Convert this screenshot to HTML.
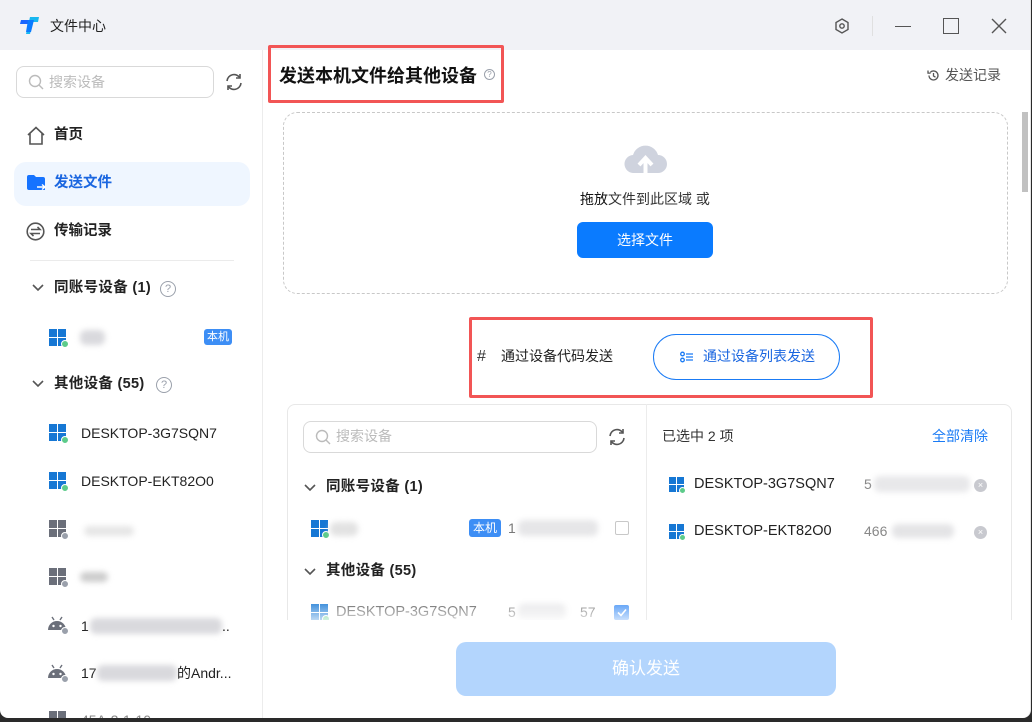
<!DOCTYPE html>
<html><head><meta charset="utf-8"><style>
*{margin:0;padding:0;box-sizing:border-box}
body{width:1032px;height:722px;overflow:hidden;background:#2a2a2a;font-family:"Liberation Sans","Noto Sans CJK SC",sans-serif;color:#222;position:relative}
.win{position:absolute;left:0;top:0;width:1031px;height:718px;background:#fff;border-radius:0 0 8px 8px;overflow:hidden;border-right:1px solid #e4e4e4}
.a{position:absolute}
.t{position:absolute;white-space:nowrap;line-height:1}
.blur{position:absolute;background:#d9d9dd;filter:blur(3px);border-radius:6px}
.win-ico{position:absolute;width:17px;height:17px}
.win-ico i{position:absolute;width:8px;height:8px}
.dot{position:absolute;width:8px;height:8px;border-radius:50%;border:1px solid #fff}
</style></head><body>
<div class="win">
<div class="a" style="left:0;top:0;width:1032px;height:50px;background:#f1f2f6"></div>
<svg class="a" style="left:20px;top:17px" width="20" height="18" viewBox="0 0 20 18"><path d="M1 3h8l-1 4H0z" fill="#1a66ff"/><path d="M10 0h9l-1 5h-5l-3 12H6z" fill="#18b7f0"/><path d="M8 3h6l-3 12H6z" fill="#0a7bff"/></svg>
<div class="t" style="left:50px;top:19px;font-size:14px;color:#222">文件中心</div>
<svg class="a" style="left:833px;top:17px" width="18" height="18" viewBox="0 0 18 18" fill="none" stroke="#555" stroke-width="1.4"><path d="M9 2l6 3.5v7L9 16l-6-3.5v-7z"/><circle cx="9" cy="9" r="2.2"/></svg>
<div class="a" style="left:872px;top:16px;width:1px;height:20px;background:#e0e0e0"></div>
<div class="a" style="left:895px;top:26px;width:16px;height:1.4px;background:#555"></div>
<div class="a" style="left:943px;top:18px;width:16px;height:16px;border:1.4px solid #555"></div>
<svg class="a" style="left:991px;top:18px" width="16" height="16" viewBox="0 0 16 16" stroke="#555" stroke-width="1.4"><path d="M1 1l14 14M15 1L1 15"/></svg>

<div class="a" style="left:262px;top:50px;width:1px;height:670px;background:#ececec"></div>
<div class="a" style="left:16px;top:66px;width:198px;height:32px;border:1px solid #d9d9d9;border-radius:8px"></div>
<svg class="a" style="left:28px;top:74px" width="16" height="16" viewBox="0 0 16 16" fill="none" stroke="#bbb" stroke-width="1.4"><circle cx="7" cy="7" r="5.5"/><path d="M11 11l4 4"/></svg>
<div class="t" style="left:49px;top:75px;font-size:14px;color:#bbb">搜索设备</div>
<svg class="a" style="left:224px;top:72px" width="20" height="20" viewBox="0 0 20 20" fill="none" stroke="#555" stroke-width="1.6"><path d="M3 9a7 7 0 0 1 13-3M17 11a7 7 0 0 1-13 3"/><path d="M16 2v4h-4M4 18v-4h4"/></svg>
<svg class="a" style="left:26px;top:126px" width="20" height="19" viewBox="0 0 20 19" fill="none" stroke="#555" stroke-width="1.6"><path d="M2 9L10 1.5 18 9M4 7.5V18h12V7.5"/></svg>
<div class="t" style="left:54px;top:128px;font-size:14.5px;font-weight:bold">首页</div>
<div class="a" style="left:14px;top:162px;width:236px;height:44px;background:#eff6ff;border-radius:12px"></div>
<svg class="a" style="left:27px;top:175px" width="19" height="17" viewBox="0 0 19 17"><path d="M0 2a2 2 0 0 1 2-2h5l2 2h7a2 2 0 0 1 2 2v11H2a2 2 0 0 1-2-2z" fill="#1673ff"/><path d="M10 12h8M15 9.5l3 2.5-3 2.5" stroke="#fff" stroke-width="1.4" fill="none"/></svg>
<div class="t" style="left:54px;top:176px;font-size:14.5px;font-weight:bold;color:#1a66e0">发送文件</div>
<svg class="a" style="left:26px;top:222px" width="19" height="19" viewBox="0 0 19 19" fill="none" stroke="#555" stroke-width="1.6"><circle cx="9.5" cy="9.5" r="8.3"/><path d="M5 7.5h9l-2.5-2.5M14 11.5H5l2.5 2.5"/></svg>
<div class="t" style="left:54px;top:224px;font-size:14.5px;font-weight:bold">传输记录</div>
<div class="a" style="left:30px;top:260px;width:204px;height:1px;background:#ebebeb"></div>
<svg class="a" style="left:32px;top:284px" width="12" height="8" viewBox="0 0 12 8" fill="none" stroke="#555" stroke-width="1.6"><path d="M1 1l5 5 5-5"/></svg>
<div class="t" style="left:54px;top:281px;font-size:14.5px;font-weight:bold;letter-spacing:.3px">同账号设备 (1)</div>
<div class="a" style="left:160px;top:281px;width:16px;height:16px;border:1.3px solid #9aa0ab;border-radius:50%;font-size:11px;color:#9aa0ab;text-align:center;line-height:14px">?</div>
<div class="win-ico" style="left:49px;top:329px"><i style="left:0;top:0;background:#1677d4"></i><i style="left:9px;top:0;background:#1677d4"></i><i style="left:0;top:9px;background:#1677d4"></i><i style="left:9px;top:9px;background:#1677d4"></i></div><div class="dot" style="left:61px;top:340px;background:#5ccb8a"></div>
<div class="blur" style="left:80px;top:330px;width:25px;height:15px"></div>
<div class="a" style="left:204px;top:329px;width:28px;height:16px;background:#3d8ef5;border-radius:3px;color:#fff;font-size:11px;text-align:center;line-height:16px">本机</div>
<svg class="a" style="left:32px;top:380px" width="12" height="8" viewBox="0 0 12 8" fill="none" stroke="#555" stroke-width="1.6"><path d="M1 1l5 5 5-5"/></svg>
<div class="t" style="left:54px;top:377px;font-size:14.5px;font-weight:bold;letter-spacing:.3px">其他设备 (55)</div>
<div class="a" style="left:156px;top:377px;width:16px;height:16px;border:1.3px solid #9aa0ab;border-radius:50%;font-size:11px;color:#9aa0ab;text-align:center;line-height:14px">?</div>

<div class="win-ico" style="left:49px;top:424px"><i style="left:0;top:0;background:#1677d4"></i><i style="left:9px;top:0;background:#1677d4"></i><i style="left:0;top:9px;background:#1677d4"></i><i style="left:9px;top:9px;background:#1677d4"></i></div><div class="dot" style="left:61px;top:436px;background:#5ccb8a"></div>
<div class="t" style="left:81px;top:426px;font-size:14px;color:#222">DESKTOP-3G7SQN7</div>
<div class="win-ico" style="left:49px;top:472px"><i style="left:0;top:0;background:#1677d4"></i><i style="left:9px;top:0;background:#1677d4"></i><i style="left:0;top:9px;background:#1677d4"></i><i style="left:9px;top:9px;background:#1677d4"></i></div><div class="dot" style="left:61px;top:484px;background:#5ccb8a"></div>
<div class="t" style="left:81px;top:474px;font-size:14px;color:#222">DESKTOP-EKT82O0</div>
<div class="win-ico" style="left:49px;top:520px"><i style="left:0;top:0;background:#6b6f7a"></i><i style="left:9px;top:0;background:#6b6f7a"></i><i style="left:0;top:9px;background:#6b6f7a"></i><i style="left:9px;top:9px;background:#6b6f7a"></i></div><div class="dot" style="left:61px;top:532px;background:#9aa0ab"></div>
<div class="blur" style="left:84px;top:526px;width:50px;height:10px;background:#e6e6e6"></div>
<div class="win-ico" style="left:49px;top:568px"><i style="left:0;top:0;background:#6b6f7a"></i><i style="left:9px;top:0;background:#6b6f7a"></i><i style="left:0;top:9px;background:#6b6f7a"></i><i style="left:9px;top:9px;background:#6b6f7a"></i></div><div class="dot" style="left:61px;top:580px;background:#9aa0ab"></div>
<div class="blur" style="left:80px;top:572px;width:28px;height:10px;background:#ccc"></div>
<svg class="a" style="left:47px;top:616px" width="20" height="16" viewBox="0 0 20 16"><path d="M5 1l2 3M15 1l-2 3" stroke="#6b6f7a" stroke-width="1.4"/><path d="M1 14a9 9 0 0 1 18 0z" fill="#6b6f7a"/><circle cx="6.5" cy="10" r="1.2" fill="#fff"/><circle cx="13.5" cy="10" r="1.2" fill="#fff"/></svg><div class="dot" style="left:61px;top:627px;background:#9aa0ab"></div>
<div class="t" style="left:81px;top:619px;font-size:14px">1</div><div class="blur" style="left:90px;top:618px;width:132px;height:16px"></div><div class="t" style="left:222px;top:619px;font-size:14px">..</div>
<svg class="a" style="left:47px;top:664px" width="20" height="16" viewBox="0 0 20 16"><path d="M5 1l2 3M15 1l-2 3" stroke="#6b6f7a" stroke-width="1.4"/><path d="M1 14a9 9 0 0 1 18 0z" fill="#6b6f7a"/><circle cx="6.5" cy="10" r="1.2" fill="#fff"/><circle cx="13.5" cy="10" r="1.2" fill="#fff"/></svg><div class="dot" style="left:61px;top:675px;background:#9aa0ab"></div>
<div class="t" style="left:81px;top:666px;font-size:14px">17</div><div class="blur" style="left:97px;top:665px;width:80px;height:16px"></div><div class="t" style="left:177px;top:666px;font-size:14px">的Andr...</div>
<div class="win-ico" style="left:49px;top:711px"><i style="left:0;top:0;background:#6b6f7a"></i><i style="left:9px;top:0;background:#6b6f7a"></i></div>
<div class="t" style="left:81px;top:713px;font-size:14px;color:#888">45A-2-1-10</div>

<div class="a" style="left:1022px;top:112px;width:6px;height:80px;background:#c1c1c1"></div>
<div class="a" style="left:268px;top:45px;width:236px;height:58px;border:3px solid #f25555;border-radius:2px"></div>
<div class="t" style="left:279px;top:67px;font-size:18px;font-weight:bold;color:#111">发送本机文件给其他设备</div>
<div class="a" style="left:484px;top:69px;width:11px;height:11px;border:1px solid #9aa0ab;border-radius:50%;font-size:8px;color:#9aa0ab;text-align:center;line-height:10px">?</div>
<svg class="a" style="left:927px;top:69px" width="13" height="13" viewBox="0 0 13 13" fill="none" stroke="#555" stroke-width="1.3"><path d="M2 6.5a4.5 4.5 0 1 0 1.3-3.2M1 1.5v2.6h2.6"/><path d="M6.5 4v3l2 1.2"/></svg>
<div class="t" style="left:945px;top:68px;font-size:14px;color:#555">发送记录</div>

<div class="a" style="left:283px;top:112px;width:725px;height:182px;border:1.5px dashed #c8c8c8;border-radius:14px"></div>
<svg class="a" style="left:624px;top:143px" width="43" height="33" viewBox="0 0 43 33"><path d="M10 30a9 9 0 0 1-1-18 13 13 0 0 1 25 0 9 9 0 0 1 0 18z" fill="#cfd3de"/><path d="M21.5 33V17M15 22l6.5-7 6.5 7" stroke="#fff" stroke-width="4" fill="none"/></svg>
<div class="t" style="left:580px;top:192px;font-size:14px;color:#333"><b style="font-weight:normal;color:#111">拖放</b>文件到此区域 或</div>
<div class="a" style="left:577px;top:222px;width:136px;height:36px;background:#0a7bff;border-radius:6px;color:#fff;font-size:14px;text-align:center;line-height:36px">选择文件</div>

<div class="a" style="left:469px;top:317px;width:404px;height:81px;border:3px solid #f25555;border-radius:2px"></div>
<div class="t" style="left:477px;top:349px;font-size:16px;color:#333">#</div>
<div class="t" style="left:501px;top:349px;font-size:14px;color:#222">通过设备代码发送</div>
<div class="a" style="left:653px;top:334px;width:187px;height:46px;border:1px solid #1a7bf5;border-radius:23px"></div>
<svg class="a" style="left:680px;top:351px" width="13" height="12" viewBox="0 0 13 12" fill="none" stroke="#1a7bf5" stroke-width="1.3"><circle cx="2.5" cy="3" r="1.8"/><circle cx="2.5" cy="9" r="1.8"/><path d="M6 3h7M6 6h7M6 9h7"/></svg>
<div class="t" style="left:703px;top:349px;font-size:14px;color:#1a66e0">通过设备列表发送</div>

<div class="a" style="left:287px;top:404px;width:725px;height:240px;border:1px solid #e8e8e8;border-radius:8px"></div>
<div class="a" style="left:646px;top:404px;width:1px;height:220px;background:#ececec"></div>
<div class="a" style="left:303px;top:421px;width:294px;height:32px;border:1px solid #d9d9d9;border-radius:8px"></div>
<svg class="a" style="left:315px;top:429px" width="16" height="16" viewBox="0 0 16 16" fill="none" stroke="#bbb" stroke-width="1.4"><circle cx="7" cy="7" r="5.5"/><path d="M11 11l4 4"/></svg>
<div class="t" style="left:336px;top:429px;font-size:14px;color:#bbb">搜索设备</div>
<svg class="a" style="left:607px;top:427px" width="20" height="20" viewBox="0 0 20 20" fill="none" stroke="#555" stroke-width="1.6"><path d="M3 9a7 7 0 0 1 13-3M17 11a7 7 0 0 1-13 3"/><path d="M16 2v4h-4M4 18v-4h4"/></svg>
<svg class="a" style="left:304px;top:484px" width="12" height="8" viewBox="0 0 12 8" fill="none" stroke="#555" stroke-width="1.6"><path d="M1 1l5 5 5-5"/></svg>
<div class="t" style="left:326px;top:480px;font-size:14.5px;font-weight:bold;letter-spacing:.3px">同账号设备 (1)</div>
<div class="win-ico" style="left:311px;top:520px"><i style="left:0;top:0;background:#1677d4"></i><i style="left:9px;top:0;background:#1677d4"></i><i style="left:0;top:9px;background:#1677d4"></i><i style="left:9px;top:9px;background:#1677d4"></i></div><div class="dot" style="left:322px;top:531px;background:#5ccb8a"></div>
<div class="blur" style="left:330px;top:522px;width:28px;height:14px;background:#e2e2e2"></div>
<div class="a" style="left:469px;top:519px;width:32px;height:18px;background:#3d8ef5;border-radius:3px;color:#fff;font-size:12px;text-align:center;line-height:18px">本机</div>
<div class="t" style="left:508px;top:521px;font-size:14px;color:#777">1</div><div class="blur" style="left:518px;top:520px;width:80px;height:16px;background:#e6e6e8"></div>
<div class="a" style="left:615px;top:521px;width:14px;height:14px;border:1px solid #c8c8c8;border-radius:2px"></div>
<svg class="a" style="left:304px;top:568px" width="12" height="8" viewBox="0 0 12 8" fill="none" stroke="#555" stroke-width="1.6"><path d="M1 1l5 5 5-5"/></svg>
<div class="t" style="left:326px;top:564px;font-size:14.5px;font-weight:bold;letter-spacing:.3px">其他设备 (55)</div>
<div class="win-ico" style="left:311px;top:604px"><i style="left:0;top:0;background:#1677d4"></i><i style="left:9px;top:0;background:#1677d4"></i><i style="left:0;top:9px;background:#1677d4"></i><i style="left:9px;top:9px;background:#1677d4"></i></div><div class="dot" style="left:322px;top:615px;background:#5ccb8a"></div>
<div class="t" style="left:336px;top:605px;font-size:14.5px;color:#555">DESKTOP-3G7SQN7</div>
<div class="t" style="left:508px;top:605px;font-size:14px;color:#777">5</div><div class="blur" style="left:518px;top:604px;width:48px;height:16px;background:#e6e6e8"></div><div class="t" style="left:580px;top:605px;font-size:14px;color:#777">57</div>
<div class="a" style="left:614px;top:605px;width:15px;height:15px;background:#3d8ef5;border-radius:2px"></div>
<svg class="a" style="left:617px;top:608px" width="10" height="9" viewBox="0 0 10 9" fill="none" stroke="#fff" stroke-width="1.6"><path d="M1 4.5l3 3 5-6"/></svg>
<div class="a" style="left:288px;top:598px;width:358px;height:26px;background:linear-gradient(rgba(255,255,255,0),rgba(255,255,255,.85))"></div>
<div class="a" style="left:286px;top:620px;width:740px;height:30px;background:#fff"></div>

<div class="t" style="left:662px;top:429px;font-size:14px;color:#333">已选中 2 项</div>
<div class="t" style="left:932px;top:429px;font-size:14px;color:#1a7bf5">全部清除</div>
<div class="win-ico" style="left:669px;top:477px;width:15px;height:15px"><i style="left:0;top:0;width:7px;height:7px;background:#1677d4"></i><i style="left:8px;top:0;width:7px;height:7px;background:#1677d4"></i><i style="left:0;top:8px;width:7px;height:7px;background:#1677d4"></i><i style="left:8px;top:8px;width:7px;height:7px;background:#1677d4"></i></div><div class="dot" style="left:679px;top:487px;background:#5ccb8a;width:7px;height:7px"></div>
<div class="t" style="left:694px;top:477px;font-size:14.5px;color:#222">DESKTOP-3G7SQN7</div>
<div class="t" style="left:864px;top:477px;font-size:14px;color:#888">5</div><div class="blur" style="left:874px;top:476px;width:96px;height:16px;background:#e8e8ea"></div>
<div class="a" style="left:974px;top:479px;width:13px;height:13px;background:#c8c9cf;border-radius:50%;color:#fff;font-size:9px;text-align:center;line-height:13px">×</div>
<div class="win-ico" style="left:669px;top:524px;width:15px;height:15px"><i style="left:0;top:0;width:7px;height:7px;background:#1677d4"></i><i style="left:8px;top:0;width:7px;height:7px;background:#1677d4"></i><i style="left:0;top:8px;width:7px;height:7px;background:#1677d4"></i><i style="left:8px;top:8px;width:7px;height:7px;background:#1677d4"></i></div><div class="dot" style="left:679px;top:534px;background:#5ccb8a;width:7px;height:7px"></div>
<div class="t" style="left:694px;top:524px;font-size:14.5px;color:#222">DESKTOP-EKT82O0</div>
<div class="t" style="left:864px;top:524px;font-size:14px;color:#888">466</div><div class="blur" style="left:892px;top:524px;width:62px;height:14px;background:#e4e4e6"></div>
<div class="a" style="left:974px;top:526px;width:13px;height:13px;background:#c8c9cf;border-radius:50%;color:#fff;font-size:9px;text-align:center;line-height:13px">×</div>

<div class="a" style="left:456px;top:642px;width:380px;height:54px;background:#b3d5fd;border-radius:10px;color:#fff;font-size:17px;text-align:center;line-height:54px">确认发送</div>
</div>
</body></html>
